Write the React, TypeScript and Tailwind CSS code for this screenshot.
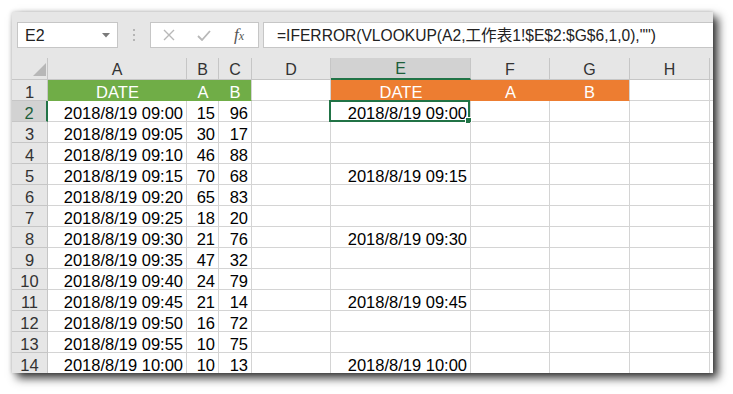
import React from 'react';

const cols = [
  { key: 'A', w: 'w-[139px]' },
  { key: 'B', w: 'w-[32px]' },
  { key: 'C', w: 'w-[33px]' },
  { key: 'D', w: 'w-[79px]' },
  { key: 'E', w: 'w-[140px]' },
  { key: 'F', w: 'w-[79px]' },
  { key: 'G', w: 'w-[80px]' },
  { key: 'H', w: 'w-[80px]' },
];

const data: [string, number, number][] = [
  ['2018/8/19 09:00', 15, 96],
  ['2018/8/19 09:05', 30, 17],
  ['2018/8/19 09:10', 46, 88],
  ['2018/8/19 09:15', 70, 68],
  ['2018/8/19 09:20', 65, 83],
  ['2018/8/19 09:25', 18, 20],
  ['2018/8/19 09:30', 21, 76],
  ['2018/8/19 09:35', 47, 32],
  ['2018/8/19 09:40', 24, 79],
  ['2018/8/19 09:45', 21, 14],
  ['2018/8/19 09:50', 16, 72],
  ['2018/8/19 09:55', 10, 75],
  ['2018/8/19 10:00', 10, 13],
];

const font = { fontFamily: '"Liberation Sans", Arial, "Noto Sans CJK TC", sans-serif' };

function Toolbar() {
  return (
    <div className="flex items-center h-[26px] mt-[10px] mb-[10px] pl-[5px]">
      {/* name box */}
      <div className="relative flex items-center w-[101px] h-full bg-white border border-[#c6c6c6] pl-[7px] pt-[1px] text-[16px] text-[#222]">
        E2
        <svg className="absolute right-[7px] top-[10px]" width="8" height="5" viewBox="0 0 8 5">
          <path d="M0 0h8L4 4.5z" fill="#7a7a7a" />
        </svg>
      </div>
      <div className="w-[32px] flex flex-col items-center gap-[3px]">
        <span className="w-[2px] h-[2px] bg-[#b5b5b5]" />
        <span className="w-[2px] h-[2px] bg-[#b5b5b5]" />
        <span className="w-[2px] h-[2px] bg-[#b5b5b5]" />
      </div>
      {/* cancel / enter / fx */}
      <div className="flex items-center w-[109px] h-full bg-white border border-[#c6c6c6]">
        <svg className="ml-[12px]" width="12" height="12" viewBox="0 0 12 12">
          <path d="M1 1l10 10M11 1L1 11" stroke="#b8b8b8" strokeWidth="1.4" />
        </svg>
        <svg className="ml-[22px]" width="14" height="11" viewBox="0 0 14 11">
          <path d="M1 6l4 4 8-9" stroke="#b8b8b8" strokeWidth="1.8" fill="none" />
        </svg>
        <span
          className="ml-[23px] text-[17px] italic text-[#555]"
          style={{ fontFamily: '"Liberation Serif", serif' }}
        >
          f<span className="text-[12px]">x</span>
        </span>
      </div>
      <div className="flex-1 flex items-center h-full ml-[4px] bg-white border border-[#c6c6c6] border-r-0 pl-[13px] pt-[1px] text-[15.6px] text-[#222] whitespace-nowrap">
        =IFERROR(VLOOKUP(A2,工作表1!$E$2:$G$6,1,0),"")
      </div>
    </div>
  );
}

function HeaderRow() {
  return (
    <div className="flex h-[22px]">
      <div className="relative w-[36px] shrink-0 border-r border-b border-[#c6c6c6] bg-[#e6e6e6]">
        <svg className="absolute left-[21px] top-[5px]" width="13" height="13" viewBox="0 0 13 13">
          <path d="M13 0v13H0z" fill="#b7b7b7" />
        </svg>
      </div>
      {cols.map((c) =>
        c.key === 'E' ? (
          <div
            key={c.key}
            className={`${c.w} shrink-0 flex items-center justify-center pt-[2px] border-r border-[#c6c6c6] border-b-2 border-b-[#217346] bg-[#d2d2d2] text-[#1d5e3a] text-[16px]`}
          >
            {c.key}
          </div>
        ) : (
          <div
            key={c.key}
            className={`${c.w} shrink-0 flex items-center justify-center pt-[2px] border-r border-b border-[#c6c6c6] bg-[#e6e6e6] text-[#333] text-[16px]`}
          >
            {c.key}
          </div>
        )
      )}
      <div className="flex-1 border-b border-[#c6c6c6] bg-[#e6e6e6]" />
    </div>
  );
}

function RowHead({ n }: { n: number }) {
  if (n === 2) {
    return (
      <div className="w-[36px] shrink-0 flex items-center justify-center pt-[4px] border-r-2 border-r-[#217346] border-b border-[#c6c6c6] bg-[#d2d2d2] text-[#1d5e3a]">
        {n}
      </div>
    );
  }
  return (
    <div className="w-[36px] shrink-0 flex items-center justify-center pt-[4px] border-r border-b border-[#c6c6c6] bg-[#e6e6e6] text-[#333]">
      {n}
    </div>
  );
}

function TitleRow() {
  const fill = 'shrink-0 flex items-center justify-center pt-[4px] text-white';
  return (
    <div className="flex h-[21px] text-[16.5px]">
      <RowHead n={1} />
      <div className={`w-[139px] ${fill} bg-[#70ad47] border-b border-[#70ad47]`}>DATE</div>
      <div className={`w-[32px] ${fill} bg-[#70ad47] border-b border-[#70ad47]`}>A</div>
      <div className={`w-[33px] ${fill} bg-[#70ad47] border-b border-r border-[#70ad47] border-r-[#d4d4d4]`}>B</div>
      <div className="w-[79px] shrink-0 border-r border-b border-[#d4d4d4]" />
      <div className={`w-[140px] ${fill} bg-[#ed7d31] border-b border-[#ed7d31]`}>DATE</div>
      <div className={`w-[79px] ${fill} bg-[#ed7d31] border-b border-[#ed7d31]`}>A</div>
      <div className={`w-[80px] ${fill} bg-[#ed7d31] border-b border-r border-[#ed7d31] border-r-[#d4d4d4]`}>B</div>
      <div className="w-[80px] shrink-0 border-r border-b border-[#d4d4d4]" />
      <div className="flex-1 border-b border-[#d4d4d4]" />
    </div>
  );
}

function DataRow({ n, row }: { n: number; row: [string, number, number] }) {
  const [date, a, b] = row;
  const showE = (n - 2) % 3 === 0;
  const cell = 'shrink-0 flex items-center justify-end pr-[3px] pt-[4px] border-r border-b border-[#d4d4d4]';
  return (
    <div className="flex h-[21px] text-[16.5px] text-black">
      <RowHead n={n} />
      <div className={`w-[139px] ${cell}`}>{date}</div>
      <div className={`w-[32px] ${cell}`}>{a}</div>
      <div className={`w-[33px] ${cell}`}>{b}</div>
      <div className={`w-[79px] ${cell}`} />
      <div className={`relative w-[140px] ${cell}`}>
        {showE ? date : ''}
        {n === 2 && (
          <div className="absolute -left-[2px] -top-[1px] w-[141px] h-[22px] border-2 border-[#217346]">
            <div className="absolute -right-[4px] -bottom-[4px] w-[7px] h-[7px] bg-[#217346] border border-white" />
          </div>
        )}
      </div>
      <div className={`w-[79px] ${cell}`} />
      <div className={`w-[80px] ${cell}`} />
      <div className={`w-[80px] ${cell}`} />
      <div className="flex-1 border-b border-[#d4d4d4]" />
    </div>
  );
}

export default function App() {
  return (
    <div className="w-[733px] h-[394px] bg-white overflow-hidden pt-[12px] pl-[12px]" style={font}>
      <div className="w-[701px] h-[361px] bg-[#e6e6e6] overflow-hidden shadow-[0_0_4px_rgba(0,0,0,0.2),5px_5px_9px_rgba(0,0,0,0.8)]">
        <Toolbar />
        <div className="bg-white">
          <HeaderRow />
          <TitleRow />
          {data.map((row, i) => (
            <DataRow key={i} n={i + 2} row={row} />
          ))}
        </div>
      </div>
    </div>
  );
}
